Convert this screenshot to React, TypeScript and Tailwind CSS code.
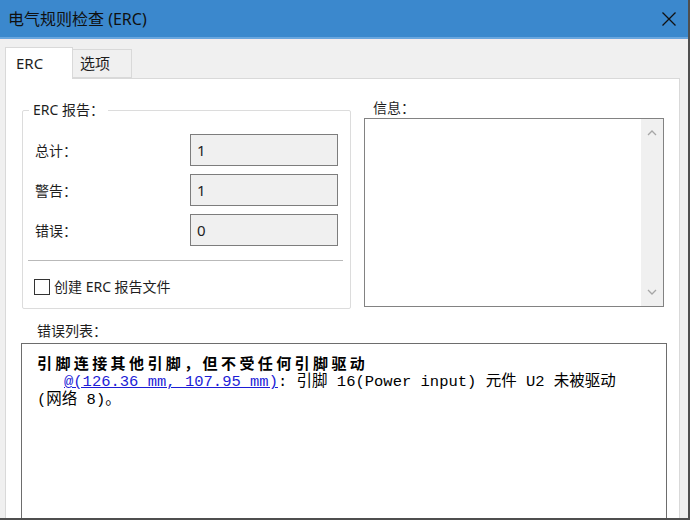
import React from 'react';

const uiFont = { fontFamily: '"Noto Sans", "Noto Sans CJK SC", sans-serif' };
const monoFont = { fontFamily: '"Liberation Mono", "Noto Sans CJK SC", monospace' };

const ReadOnlyField: React.FC<{ label: string; value: string }> = ({ label, value }) => (
  <div className="flex items-center h-[32px]">
    <span className="w-[155px] text-[14px] text-[#1e1e1e]">{label}</span>
    <div className="w-[148px] h-[32px] border border-[#7d7d7d] bg-[#f0f0f0] flex items-center pl-[6px] text-[15px] text-[#1e1e1e]">
      {value}
    </div>
  </div>
);

const App: React.FC = () => {
  return (
    <div className="w-[693px] h-[521px] bg-white overflow-hidden" style={uiFont}>
      <div className="w-[690px] h-[520px] flex flex-col bg-[#f0f0f0] border-r-2 border-b-2 border-[#4f4f4f]">
        {/* title bar */}
        <div className="h-[39px] shrink-0 bg-[#3b88cd] border-b-2 border-[#6aa6de] flex items-center justify-between pl-[8px] pr-[10px]">
          <span className="text-[16px] text-[#101010]">电气规则检查 (ERC)</span>
          <svg width="16" height="16" viewBox="0 0 16 16" className="mr-[1px]">
            <path d="M1.5 1.5 L14.5 14.5 M14.5 1.5 L1.5 14.5" stroke="#111" strokeWidth="1.3" />
          </svg>
        </div>
        <div className="h-px bg-[#f6ecec] shrink-0" />

        <div className="flex-1 flex flex-col pl-[5px] pr-[8px] pt-[6px] min-h-0">
          {/* tabs */}
          <div className="flex items-end h-[32px] shrink-0">
            <div className="relative z-10 -mb-px h-[32px] w-[68px] bg-white border border-b-0 border-[#d9d9d9] pl-[10px] pt-[4px] text-[15px] text-[#1e1e1e]">
              ERC
            </div>
            <div className="h-[29px] w-[59px] bg-[#f0f0f0] border border-l-0 border-[#d9d9d9] pl-[7px] pt-[2px] text-[15px] text-[#1e1e1e]">
              选项
            </div>
          </div>

          {/* tab page */}
          <div className="flex-1 min-h-0 flex flex-col bg-white border border-b-0 border-[#d9d9d9] overflow-hidden">
            <div className="flex pl-[16px] shrink-0">
              {/* ERC report group */}
              <div className="relative mt-[31px] w-[329px] h-[199px] border border-[#dcdcdc] rounded-[2px]">
                <span className="absolute left-[6px] top-[-11px] bg-white px-[4px] text-[14px] leading-[20px] text-[#1e1e1e]">
                  ERC 报告：
                </span>
                <div className="flex flex-col gap-[8px] pl-[12px] pt-[23px]">
                  <ReadOnlyField label="总计：" value="1" />
                  <ReadOnlyField label="警告：" value="1" />
                  <ReadOnlyField label="错误：" value="0" />
                </div>
                <div className="mx-[5px] mr-[7px] mt-[14px] h-[2px] border-t border-[#b9b9b9] border-b border-b-white" />
                <label className="flex items-center gap-[4px] pl-[11px] mt-[14px] text-[14px] text-[#1e1e1e]">
                  <span className="w-[16px] h-[16px] border border-[#333] bg-white" />
                  创建 ERC 报告文件
                </label>
              </div>

              {/* info */}
              <div className="ml-[13px] mt-[19px] flex flex-col">
                <span className="pl-[9px] text-[14px] leading-[20px] text-[#1e1e1e]">信息：</span>
                <div className="w-[300px] h-[189px] border border-[#828282] flex justify-end">
                  <div className="w-[22px] h-full bg-[#f0f0f0] flex flex-col items-center justify-between py-[11px]">
                    <svg width="10" height="6" viewBox="0 0 10 6">
                      <path d="M1 5 L5 1 L9 5" fill="none" stroke="#a6a6a6" strokeWidth="1.3" />
                    </svg>
                    <svg width="10" height="6" viewBox="0 0 10 6">
                      <path d="M1 1 L5 5 L9 1" fill="none" stroke="#a6a6a6" strokeWidth="1.3" />
                    </svg>
                  </div>
                </div>
              </div>
            </div>

            {/* error list */}
            <span className="pl-[31px] mt-[12px] text-[14px] leading-[20px] text-[#1e1e1e] shrink-0">错误列表：</span>
            <div className="ml-[15px] mt-[2px] w-[646px] flex-1 border border-b-0 border-[#6d6d6d] pl-[15px] pt-[9px] text-[#000]">
              <div className="text-[15px] leading-[20px] font-bold tracking-[3.4px]" style={{ fontFamily: '"Noto Sans CJK SC", sans-serif' }}>
                引脚连接其他引脚，但不受任何引脚驱动
              </div>
              <div className="text-[15.5px] leading-[18px] whitespace-pre" style={monoFont}>
                <span className="inline-block w-[27px]" />
                <span className="text-[#1d1dd6] underline">@(126.36 mm, 107.95 mm)</span>
                : 引脚 16(Power input) 元件 U2 未被驱动
                <br />
                (网络 8)。
              </div>
            </div>
          </div>
        </div>
      </div>
    </div>
  );
};

export default App;
